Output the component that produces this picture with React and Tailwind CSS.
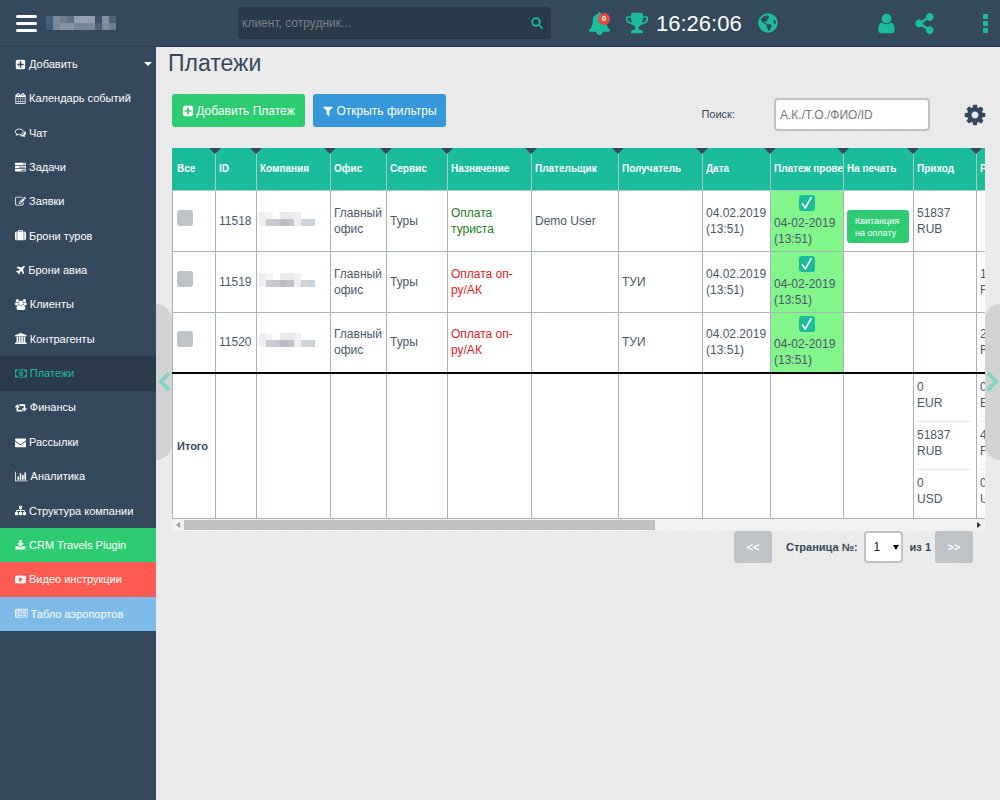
import React from "react";
import { FaGlobeAmericas, FaShareAlt } from "react-icons/fa";

const P = {
  plus: [1792, "M1408 960v-128q0-26-19-45t-45-19h-320v-320q0-26-19-45t-45-19h-128q-26 0-45 19t-19 45v320h-320q-26 0-45 19t-19 45v128q0 26 19 45t45 19h320v320q0 26 19 45t45 19h128q26 0 45-19t19-45v-320h320q26 0 45-19t19-45zm256-544v960q0 119-84.5 203.5t-203.5 84.5h-960q-119 0-203.5-84.5t-84.5-203.5v-960q0-119 84.5-203.5t203.5-84.5h960q119 0 203.5 84.5t84.5 203.5z"],
  calendar: [1792, "M192 1664h288v-288h-288v288zm352 0h320v-288h-320v288zm-352-352h288v-320h-288v320zm352 0h320v-320h-320v320zm-352-384h288v-288h-288v288zm736 736h320v-288h-320v288zm-384-736h320v-288h-320v288zm768 736h288v-288h-288v288zm-384-352h320v-320h-320v320zm-352-864v-288q0-13-9.5-22.5t-22.5-9.5h-64q-13 0-22.5 9.5t-9.5 22.5v288q0 13 9.5 22.5t22.5 9.5h64q13 0 22.5-9.5t9.5-22.5zm736 864h288v-320h-288v320zm-384-384h320v-288h-320v288zm384 0h288v-288h-288v288zm32-480v-288q0-13-9.5-22.5t-22.5-9.5h-64q-13 0-22.5 9.5t-9.5 22.5v288q0 13 9.5 22.5t22.5 9.5h64q13 0 22.5-9.5t9.5-22.5zm384-64v1280q0 52-38 90t-90 38h-1408q-52 0-90-38t-38-90v-1280q0-52 38-90t90-38h128v-96q0-66 47-113t113-47h64q66 0 113 47t47 113v96h384v-96q0-66 47-113t113-47h64q66 0 113 47t47 113v96h128q52 0 90 38t38 90z"],
  chat: [1792, "M704 384q-153 0-286 52t-211.5 141-78.5 191q0 82 53 158t149 132l97 56-35 84q34-20 62-39l44-31 53 10q78 14 153 14 153 0 286-52t211.5-141 78.5-191-78.5-191-211.5-141-286-52zm0-128q191 0 353.5 68.5t256.5 186.5 94 257-94 257-256.5 186.5-353.5 68.5q-86 0-176-16-124 88-278 128-36 9-86 16h-3q-11 0-20.5-8t-11.5-21q-1-3-1-6.5t.5-6.5 2-6l2.5-5 3.5-5.5 4-5 4.5-5 4-4.5q5-6 23-25t26-29.5 22.5-29 25-38.5 20.5-44q-124-72-195-177t-71-224q0-139 94-257t256.5-186.5 353.5-68.5zm822 1169q10 24 20.5 44t25 38.5 22.5 29 26 29.5 23 25q1 1 4 4.5t4.5 5 4 5 3.5 5.5l2.5 5 2 6 .5 6.5-1 6.5q-3 14-13 22t-22 7q-50-7-86-16-154-40-278-128-90 16-176 16-271 0-472-132 58 4 88 4 161 0 309-45t264-129q125-92 192-212t67-254q0-77-23-152 129 71 204 178t75 230q0 120-71 224.5t-195 176.5z"],
  tasks: [1792, "M1024 1408h640v-128h-640v128zm-384-512h1024v-128h-1024v128zm640-512h384v-128h-384v128zm512 832v256q0 26-19 45t-45 19h-1664q-26 0-45-19t-19-45v-256q0-26 19-45t45-19h1664q26 0 45 19t19 45zm0-512v256q0 26-19 45t-45 19h-1664q-26 0-45-19t-19-45v-256q0-26 19-45t45-19h1664q26 0 45 19t19 45zm0-512v256q0 26-19 45t-45 19h-1664q-26 0-45-19t-19-45v-256q0-26 19-45t45-19h1664q26 0 45 19t19 45z"],
  edit: [1792, "M888 1184l116-116-152-152-116 116v56h96v96h56zm440-720q-16-16-33 1l-350 350q-17 17-1 33t33-1l350-350q17-17 1-33zm80 594v190q0 119-84.5 203.5t-203.5 84.5h-832q-119 0-203.5-84.5t-84.5-203.5v-832q0-119 84.5-203.5t203.5-84.5h832q63 0 117 25 15 7 18 23 3 17-9 29l-49 49q-14 14-32 8-23-6-45-6h-832q-66 0-113 47t-47 113v832q0 66 47 113t113 47h832q66 0 113-47t47-113v-126q0-13 9-22l64-64q15-15 35-7t20 29zm-96-738l288 288-672 672h-288v-288zm444 132l-92 92-288-288 92-92q28-28 68-28t68 28l152 152q28 28 28 68t-28 68z"],
  suitcase: [1792, "M640 256h512v-128h-512v128zm-352 0v1408h-64q-92 0-158-66t-66-158v-960q0-92 66-158t158-66h64zm1120 0v1408h-1024v-1408h128v-160q0-40 28-68t68-28h576q40 0 68 28t28 68v160h128zm384 224v960q0 92-66 158t-158 66h-64v-1408h64q92 0 158 66t66 158z"],
  plane: [1664, "M1568 160q44 52 12 148t-108 172l-161 161 160 696q5 19-12 33l-128 96q-7 6-19 6-4 0-7-1-15-3-21-16l-279-508-259 259 53 194q5 17-8 31l-96 96q-9 9-23 9h-2q-15-2-24-13l-189-252-252-189q-11-7-13-23-1-13 9-25l96-97q9-9 23-9 6 0 8 1l194 53 259-259-508-279q-14-8-17-24-2-16 9-27l128-128q14-13 30-8l665 159 160-160q76-76 172-108t148 12z"],
  users: [1920, "M593 896q-162 5-265 128h-134q-82 0-138-40.5t-56-118.5q0-353 124-353 6 0 43.5 21t97.5 42.5 119 21.5q67 0 133-23-5 37-5 66 0 139 81 256zm1071 637q0 120-73 189.5t-194 69.5h-874q-121 0-194-69.5t-73-189.5q0-53 3.5-103.5t14-109 26.5-108.5 43-97.5 62-81 85.5-53.5 111.5-20q10 0 43 21.5t73 48 107 48 135 21.5 135-21.5 107-48 73-48 43-21.5q61 0 111.5 20t85.5 53.5 62 81 43 97.5 26.5 108.5 14 109 3.5 103.5zm-1024-1277q0 106-75 181t-181 75-181-75-75-181 75-181 181-75 181 75 75 181zm704 384q0 159-112.5 271.5t-271.5 112.5-271.5-112.5-112.5-271.5 112.5-271.5 271.5-112.5 271.5 112.5 112.5 271.5zm576 225q0 78-56 118.5t-138 40.5h-134q-103-123-265-128 81-117 81-256 0-29-5-66 66 23 133 23 59 0 119-21.5t97.5-42.5 43.5-21q124 0 124 353zm-128-609q0 106-75 181t-181 75-181-75-75-181 75-181 181-75 181 75 75 181z"],
  bank: [1920, "M960 0l960 384v128h-128q0 26-20.5 45t-48.5 19h-1526q-28 0-48.5-19t-20.5-45h-128v-128zm-704 640h256v768h128v-768h256v768h128v-768h256v768h128v-768h256v768h59q28 0 48.5 19t20.5 45v64h-1664v-64q0-26 20.5-45t48.5-19h59v-768zm1595 960q28 0 48.5 19t20.5 45v128h-1920v-128q0-26 20.5-45t48.5-19h1782z"],
  money: [1920, "M768 1152h384v-96h-128v-448h-114l-148 137 77 80q42-37 55-57h2v288h-128v96zm512-256q0 70-21 142t-59.5 134-101.5 101-138 39-138-39-101.5-101-59.5-134-21-142 21-142 59.5-134 101.5-101 138-39 138 39 101.5 101 59.5 134 21 142zm512 256v-512q-106 0-181-75t-75-181h-1152q0 106-75 181t-181 75v512q106 0 181 75t75 181h1152q0-106 75-181t181-75zm128-832v1152q0 26-19 45t-45 19h-1792q-26 0-45-19t-19-45v-1152q0-26 19-45t45-19h1792q26 0 45 19t19 45z"],
  retweet: [1920, "M1280 1504q0 13-9.5 22.5t-22.5 9.5h-960q-8 0-13.5-2t-9-7-5.5-8-3-11.5-1-11.5v-600h-192q-26 0-45-19t-19-45q0-24 15-41l320-384q19-22 49-22t49 22l320 384q15 17 15 41 0 26-19 45t-45 19h-192v384h576q16 0 25 11l160 192q7 10 7 21zm640-416q0 24-15 41l-320 384q-20 23-49 23t-49-23l-320-384q-15-17-15-41 0-26 19-45t45-19h192v-384h-576q-16 0-25-12l-160-192q-7-9-7-20 0-13 9.5-22.5t22.5-9.5h960q8 0 13.5 2t9 7 5.5 8 3 11.5 1 11.5v600h192q26 0 45 19t19 45z"],
  mail: [1792, "M1792 710v794q0 66-47 113t-113 47h-1472q-66 0-113-47t-47-113v-794q44 49 101 87 362 246 497 345 57 42 92.5 65.5t94.5 48 110 24.5h2q51 0 110-24.5t94.5-48 92.5-65.5q170-123 498-345 57-39 100-87zm0-294q0 79-49 151t-122 123q-376 261-468 325-10 7-42.5 31t-54 38.5-52 32.5-57.5 27-50 9h-2q-23 0-50-9t-57.5-27-52-32.5-54-38.5-42.5-31q-91-64-262-182.5t-205-142.5q-62-42-117-115.5t-55-136.5q0-78 41.5-130t118.5-52h1472q65 0 112.5 47t47.5 113z"],
  chart: [2048, "M640 896v512h-256v-512h256zm384-512v1024h-256v-1024h256zm1024 1152v128h-2048v-1536h128v1408h1920zm-640-896v768h-256v-768h256zm384-384v1152h-256v-1152h256z"],
  sitemap: [1792, "M1792 1248v320q0 40-28 68t-68 28h-320q-40 0-68-28t-28-68v-320q0-40 28-68t68-28h96v-192h-512v192h96q40 0 68 28t28 68v320q0 40-28 68t-68 28h-320q-40 0-68-28t-28-68v-320q0-40 28-68t68-28h96v-192h-512v192h96q40 0 68 28t28 68v320q0 40-28 68t-68 28h-320q-40 0-68-28t-28-68v-320q0-40 28-68t68-28h96v-192q0-52 38-90t90-38h512v-192h-96q-40 0-68-28t-28-68v-320q0-40 28-68t68-28h320q40 0 68 28t28 68v320q0 40-28 68t-68 28h-96v192h512q52 0 90 38t38 90v192h96q40 0 68 28t28 68z"],
  download: [1792, "M1344 1344q0-26-19-45t-45-19-45 19-19 45 19 45 45 19 45-19 19-45zm256 0q0-26-19-45t-45-19-45 19-19 45 19 45 45 19 45-19 19-45zm128-224v320q0 40-28 68t-68 28h-1472q-40 0-68-28t-28-68v-320q0-40 28-68t68-28h465l135 136q58 56 136 56t136-56l136-136h464q40 0 68 28t28 68zm-325-569q17 41-14 70l-448 448q-18 19-45 19t-45-19l-448-448q-31-29-14-70 17-39 59-39h256v-448q0-26 19-45t45-19h256q26 0 45 19t19 45v448h256q42 0 59 39z"],
  video: [1792, "M1280 896q0-37-30-54l-512-320q-31-20-65-2-33 18-33 56v640q0 38 33 56 16 8 31 8 20 0 34-10l512-320q30-17 30-54zm512 0q0 96-1 150t-8.5 136.5-22.5 147.5q-16 73-69 123t-124 58q-222 25-671 25t-671-25q-71-8-124.5-58t-69.5-123q-14-65-21.5-147.5t-8.5-136.5-1-150 1-150 8.5-136.5 22.5-147.5q16-73 69-123t124-58q222-25 671-25t671 25q71 8 124.5 58t69.5 123q14 65 21.5 147.5t8.5 136.5 1 150z"],
  news: [2048, "M1024 512h-384v384h384v-384zm128 640v128h-640v-128h640zm0-768v640h-640v-640h640zm640 768v128h-512v-128h512zm0-256v128h-512v-128h512zm0-256v128h-512v-128h512zm0-256v128h-512v-128h512zm-1536 960v-960h-128v960q0 26 19 45t45 19 45-19 19-45zm1664 0v-1088h-1536v1088q0 33-11 64h1483q26 0 45-19t19-45zm128-1216v1216q0 80-56 136t-136 56h-1664q-80 0-136-56t-56-136v-1088h256v-128h1792z"],
  filter: [1792, "M1595 295q17 41-14 70l-493 493v742q0 42-39 59-13 5-25 5-27 0-45-19l-256-256q-19-19-19-45v-486l-493-493q-31-29-14-70 17-39 59-39h1280q42 0 59 39z"],
  cog: [1792, "M1152 896q0-106-75-181t-181-75-181 75-75 181 75 181 181 75 181-75 75-181zm512-109v222q0 12-8 23t-20 13l-185 28q-19 54-39 91 35 50 107 138 10 12 10 25t-9 23q-27 37-99 108t-94 71q-12 0-26-9l-138-108q-44 23-91 38-16 136-29 186-7 28-36 28h-222q-14 0-24.5-8.5t-11.5-21.5l-28-184q-49-16-90-37l-141 107q-10 9-25 9-14 0-25-11-126-114-165-168-7-10-7-23 0-12 8-23 15-21 51-66.5t54-70.5q-27-50-41-99l-183-27q-13-2-21-12.5t-8-23.5v-222q0-12 8-23t19-13l186-28q14-46 39-92-40-57-107-138-10-12-10-24 0-10 9-23 26-36 98.5-107.5t94.5-71.5q13 0 26 10l138 107q44-23 91-38 16-136 29-186 7-28 36-28h222q14 0 24.5 8.5t11.5 21.5l28 184q49 16 90 37l142-107q9-9 24-9 13 0 25 10 129 119 165 170 7 8 7 22 0 12-8 23-15 21-51 66.5t-54 70.5q26 50 41 98l183 28q13 2 21 12.5t8 23.5z"],
  user: [1792, "M1536 1399q0 109-62.5 187t-150.5 78h-854q-88 0-150.5-78t-62.5-187q0-85 8.5-160.5t31.5-152 58.5-131 94-89 134.5-34.5q131 128 313 128t313-128q76 0 134.5 34.5t94 89 58.5 131 31.5 152 8.5 160.5zm-256-887q0 159-112.5 271.5t-271.5 112.5-271.5-112.5-112.5-271.5 112.5-271.5 271.5-112.5 271.5 112.5 112.5 271.5z"],
  trophy: [1792, "M522 883q-74-162-74-371h-256v96q0 78 94.5 162t235.5 113zm1078-275v-96h-256q0 209-74 371 141-29 235.5-113t94.5-162zm128-128v128q0 71-41.5 143t-112 130-173 97.5-215.5 44.5q-42 54-95 95-38 34-52.5 72.5t-14.5 89.5q0 54 30.5 91t97.5 37q75 0 133.5 45.5t58.5 114.5v64q0 14-9 23t-23 9h-832q-14 0-23-9t-9-23v-64q0-69 58.5-114.5t133.5-45.5q67 0 97.5-37t30.5-91q0-51-14.5-89.5t-52.5-72.5q-53-41-95-95-113-5-215.5-44.5t-173-97.5-112-130-41.5-143v-128q0-40 28-68t68-28h288v-96q0-66 47-113t113-47h576q66 0 113 47t47 113v96h288q40 0 68 28t28 68z"],
  bell: [1792, "M1728 1408q0 52-38 90t-90 38h-448q0 106-75 181t-181 75-181-75-75-181h-448q-52 0-90-38t-38-90q50-42 91-88t85-119.5 74.5-158.5 50-206 19.5-260q0-152 117-282.5t307-158.5q-8-19-8-39 0-40 28-68t68-28 68 28 28 68q0 20-8 39 190 28 307 158.5t117 282.5q0 139 19.5 260t50 206 74.5 158.5 85 119.5 91 88z"],
};

function Icon({ name, className = "h-3" }) {
  const [w, d] = P[name];
  return (
    <svg aria-hidden="true" viewBox={`0 0 ${w} 1792`} fill="currentColor" className={`shrink-0 ${className}`}>
      <path d={d} />
    </svg>
  );
}

const MENU = [
  ["plus", "Добавить"],
  ["calendar", "Календарь событий"],
  ["chat", "Чат"],
  ["tasks", "Задачи"],
  ["edit", "Заявки"],
  ["suitcase", "Брони туров"],
  ["plane", "Брони авиа"],
  ["users", "Клиенты"],
  ["bank", "Контрагенты"],
  ["money", "Платежи", "bg-[#2b3b4b] text-[#1abc9c]"],
  ["retweet", "Финансы"],
  ["mail", "Рассылки"],
  ["chart", "Аналитика"],
  ["sitemap", "Структура компании"],
  ["download", "CRM Travels Plugin", "bg-[#2ecc71] text-white"],
  ["video", "Видео инструкции", "bg-[#ff5b52] text-white"],
  ["news", "Табло аэропортов", "bg-[#7fbbe8] text-white"],
];

const COLUMNS = [
  ["Все", "w-[43px]"],
  ["ID", "w-[41px]"],
  ["Компания", "w-[74px]"],
  ["Офис", "w-[56px]"],
  ["Сервис", "w-[61px]"],
  ["Назначение", "w-[84px]"],
  ["Плательщик", "w-[87px]"],
  ["Получатель", "w-[84px]"],
  ["Дата", "w-[68px]"],
  ["Платеж проведен", "w-[73px]"],
  ["На печать", "w-[70px]"],
  ["Приход", "w-[63px]"],
  ["Расход", "w-[63px]"],
];

const ROWS = [
  { id: "11518", kind: "Оплата туриста", tone: "text-[#1c7c1c]", payer: "Demo User", payee: "", receipt: true, income: "51837 RUB", expense: "" },
  { id: "11519", kind: "Оплата оп-ру/АК", tone: "text-[#e81c1c]", payer: "", payee: "ТУИ", income: "", expense: "18400 RUB" },
  { id: "11520", kind: "Оплата оп-ру/АК", tone: "text-[#e81c1c]", payer: "", payee: "ТУИ", income: "", expense: "28100 RUB" },
];

function Mosaic({ rows, className }) {
  return (
    <svg aria-hidden="true" shapeRendering="crispEdges" viewBox={`0 0 ${rows[0].length * 7} ${rows.length * 7}`} className={className}>
      {rows.map((r, y) => r.map((c, x) => c && <rect key={`${x}-${y}`} x={x * 7} y={y * 7} width="7" height="7" fill={c} />))}
    </svg>
  );
}

const NAME_MOSAIC = [
  ["#4a6080", "#7c8b9b", "#6b7c8f", "#5f7287", "#94a0ad", "#97a3b0", "#93a0ae", "#3d5268", "#8290a0", "#4c6076"],
  ["#43597a", "#7b8998", "#8391a0", "#8592a2", "#76869a", "#74859a", "#7a8a9d", "#4d6178", "#7d8c9c", "#6c7d90"],
];
const COMPANY_MOSAIC = [
  ["#eeeeef", "#f5f5f6", "", "#e9eaec", "#e9eaec", "#eeeff1", "", ""],
  ["#f0f0f2", "#cacbd2", "#c6c7cf", "#bbbcc5", "#c2c3cc", "#eceef0", "#d2d3d6", "#c6d3dd"],
];

const td = "border border-[#a9b4b4] pr-1 pl-[3px] py-0";

function Money({ value }) {
  const [a, b] = value.split(" ");
  return (
    <>
      {a}
      <br />
      {b}
    </>
  );
}

function Totals({ values }) {
  return (
    <div className="flex flex-col divide-y divide-[#e8e8e8]">
      {values.map((v) => (
        <div key={v} className="h-12 pt-[5px]">
          <Money value={v} />
        </div>
      ))}
    </div>
  );
}

function Header() {
  return (
    <header className="flex h-[47px] shrink-0 items-center border-b border-[#2c3e50] bg-[#34495e] text-[#1abc9c]">
      <div className="flex w-[238px] shrink-0 items-center gap-[9px] pl-4">
        <button type="button" aria-label="Меню" className="flex w-[21px] flex-col gap-1">
          <span className="h-[3px] rounded-sm bg-white" />
          <span className="h-[3px] rounded-sm bg-white" />
          <span className="h-[3px] rounded-sm bg-white" />
        </button>
        <Mosaic rows={NAME_MOSAIC} className="h-[14px] w-[70px]" />
      </div>
      <div className="flex h-8 w-[313px] items-center rounded bg-[#293a4a] pr-2">
        <input type="text" aria-label="Поиск клиента" placeholder="клиент, сотрудник..." className="min-w-0 flex-1 bg-transparent px-1 text-[12px] outline-none placeholder:text-[#7b7f84]" />
        <button type="button" aria-label="Найти">
          <svg viewBox="0 0 12 12" className="size-3" fill="none" stroke="currentColor" strokeWidth="1.7" strokeLinecap="round">
            <circle cx="5" cy="5" r="3.8" />
            <path d="M8 8l3 3" />
          </svg>
        </button>
      </div>
      <div className="ml-[37px] flex items-center gap-3.5">
        <button type="button" aria-label="Уведомления" className="relative">
          <Icon name="bell" className="size-[23px]" />
          <span className="absolute top-px right-px flex size-3 items-center justify-center rounded-full bg-[#e74c3c] text-[8px] font-bold text-white">0</span>
        </button>
        <button type="button" aria-label="Достижения">
          <Icon name="trophy" className="size-6" />
        </button>
      </div>
      <time className="ml-[7px] text-[22px] text-white">16:26:06</time>
      <button type="button" aria-label="Язык" className="ml-4">
        <FaGlobeAmericas className="size-5" />
      </button>
      <div className="ml-auto flex items-center">
        <button type="button" aria-label="Профиль" className="mr-4">
          <Icon name="user" className="size-[23px]" />
        </button>
        <button type="button" aria-label="Поделиться" className="mr-12">
          <FaShareAlt className="size-[21px]" />
        </button>
        <button type="button" aria-label="Ещё" className="mr-3 flex flex-col gap-0.5">
          <span className="size-[5px] rounded-[1px] bg-current" />
          <span className="size-[5px] rounded-[1px] bg-current" />
          <span className="size-[5px] rounded-[1px] bg-current" />
        </button>
      </div>
    </header>
  );
}

function Sidebar() {
  return (
    <nav className="w-[156px] shrink-0 bg-[#34495e] text-[11px] text-white">
      <ul className="grid h-[584px] auto-rows-fr">
        {MENU.map(([icon, label, tone = ""], i) => (
          <li key={label} className="min-h-0">
            <a href="#" className={`flex h-full items-center gap-[3px] pr-1 pl-[15px] whitespace-nowrap ${tone}`}>
              <Icon name={icon} className="h-[11px]" />
              {label}
              {i === 0 && <span className="ml-auto border-x-4 border-t-4 border-x-transparent border-t-white" />}
            </a>
          </li>
        ))}
      </ul>
    </nav>
  );
}

function PaymentsTable() {
  return (
    <div className="overflow-x-auto [scrollbar-width:none]">
      <table className="w-[868px] table-fixed border-collapse bg-white text-[12px] leading-4 text-[#4b586b]">
        <colgroup>
          {COLUMNS.map(([name, w]) => (
            <col key={name} className={w} />
          ))}
        </colgroup>
        <thead>
          <tr className="h-[42px] bg-[#1abc9c] text-left text-[10px] text-white">
            {COLUMNS.map(([name]) => (
              <th key={name} className="relative border-x border-b border-[#a9c9c3] pl-[3px] whitespace-nowrap first:border-l-[#1abc9c] first:pl-1">
                <span className="block overflow-hidden">{name}</span>
                <span className="absolute top-0 -right-1.5 z-10 border-x-[6px] border-t-[6px] border-x-transparent border-t-[#34495e]" />
              </th>
            ))}
          </tr>
        </thead>
        <tbody>
          {ROWS.map((r) => (
            <tr key={r.id} className="h-[61px]">
              <td className={td}>
                <input type="checkbox" aria-label={`Выбрать ${r.id}`} className="mb-1.5 ml-px block size-4 appearance-none rounded-[3px] bg-[#bdc3c7]" />
              </td>
              <td className={td}>{r.id}</td>
              <td className="border border-[#a9b4b4] p-0 pl-0.5">
                <Mosaic rows={COMPANY_MOSAIC} className="mb-1 h-[14px] w-14" />
              </td>
              <td className={td}>Главный офис</td>
              <td className={td}>Туры</td>
              <td className={`${td} ${r.tone}`}>{r.kind}</td>
              <td className={td}>{r.payer}</td>
              <td className={td}>{r.payee}</td>
              <td className={td}>04.02.2019 (13:51)</td>
              <td className={`${td} bg-[#82f58b]`}>
                <span className="relative mx-auto mb-1 block size-4">
                  <input type="checkbox" defaultChecked aria-label={`Платеж ${r.id} проведен`} className="block size-4 appearance-none rounded-[3px] bg-[#1abc9c]" />
                  <svg aria-hidden="true" viewBox="0 0 16 16" className="pointer-events-none absolute inset-0 size-4" fill="none" stroke="white" strokeWidth="1.6" strokeLinecap="round" strokeLinejoin="round">
                    <path d="M3.5 9l2.8 4L12 2.8" />
                  </svg>
                </span>
                04-02-2019 (13:51)
              </td>
              <td className={td}>
                {r.receipt && (
                  <button type="button" className="mt-3 block h-[33px] w-[62px] rounded-[3px] bg-[#2ecc71] pl-2 text-left text-[9px] leading-3 text-white">
                    Квитанция на оплату
                  </button>
                )}
              </td>
              <td className={td}>
                <Money value={r.income} />
              </td>
              <td className={td}>
                <Money value={r.expense} />
              </td>
            </tr>
          ))}
          <tr className="h-[143px] border-t-2 border-t-black">
            <th scope="row" className="border-x border-b border-[#a9b4b4] px-1 text-left text-[11px] text-[#34495e]">Итого</th>
            {COLUMNS.slice(1, 11).map(([name]) => (
              <td key={name} className="border-x border-b border-[#a9b4b4]" />
            ))}
            <td className="border-x border-b border-[#a9b4b4] py-0 pr-1 pl-[3px] align-top">
              <Totals values={["0 EUR", "51837 RUB", "0 USD"]} />
            </td>
            <td className="border-x border-b border-[#a9b4b4] py-0 pr-1 pl-[3px] align-top">
              <Totals values={["0 EUR", "46500 RUB", "0 USD"]} />
            </td>
          </tr>
        </tbody>
      </table>
    </div>
  );
}

function Pager() {
  return (
    <div className="mr-3 flex items-center justify-end text-[11px] font-bold text-[#34495e]">
      <button type="button" aria-label="Назад" className="h-8 w-[38px] rounded-[3px] bg-[#bdc3c7] text-white">&lt;&lt;</button>
      <label htmlFor="page" className="ml-[14px]">Страница №:</label>
      <span className="relative ml-1.5">
        <select id="page" className="block h-8 w-[39px] appearance-none rounded border-2 border-[#bdc3c7] bg-white pl-2 text-[12px] font-normal text-[#222]">
          <option>1</option>
        </select>
        <span className="pointer-events-none absolute top-3.5 right-1 border-x-[3px] border-t-[5px] border-x-transparent border-t-black" />
      </span>
      <span className="ml-[7px]">из 1</span>
      <button type="button" aria-label="Вперед" className="ml-1 h-8 w-[38px] rounded-[3px] bg-[#bdc3c7] text-white">&gt;&gt;</button>
    </div>
  );
}

export default function App() {
  return (
    <div className="flex min-h-screen flex-col overflow-hidden font-['Liberation_Sans',Arial,sans-serif]">
      <Header />
      <div className="flex flex-1">
        <Sidebar />
        <main className="relative min-w-0 flex-1 bg-[#ededed] bg-[repeating-linear-gradient(0deg,rgba(0,0,0,0.01)_0px,rgba(0,0,0,0.01)_1px,transparent_1px,transparent_2px),repeating-linear-gradient(90deg,rgba(0,0,0,0.01)_0px,rgba(0,0,0,0.01)_1px,transparent_1px,transparent_3px)] pr-[15px] pl-4">
          <h1 className="-ml-1 h-8 text-[23px] leading-8 text-[#34495e]">Платежи</h1>
          <div className="mt-[15px] flex items-start text-[12px]">
            <button type="button" className="flex h-[33px] w-[133px] items-center justify-center gap-0.5 rounded-[3px] bg-[#2ecc71] text-white">
              <Icon name="plus" />
              Добавить Платеж
            </button>
            <button type="button" className="ml-2 flex h-[33px] w-[133px] items-center justify-center gap-0.5 rounded-[3px] bg-[#3498db] text-white">
              <Icon name="filter" />
              Открыть фильтры
            </button>
            <div className="mt-1 ml-auto flex items-center">
              <label htmlFor="search" className="text-[11px] text-[#34495e]">Поиск:</label>
              <input id="search" type="text" placeholder="А.К./Т.О./ФИО/ID" className="ml-[39px] h-[33px] w-[156px] rounded border-2 border-[#bdc3c7] bg-white px-1 text-[12px] outline-none placeholder:text-[#777]" />
              <button type="button" aria-label="Настройки" className="-mr-0.5 ml-[33px] text-[#34495e]">
                <Icon name="cog" className="h-6" />
              </button>
            </div>
          </div>
          <div className="mt-[17px]">
            <PaymentsTable />
            <div aria-hidden="true" className="flex h-3 items-center justify-between bg-[#f1f1f1] px-1">
              <span className="border-y-[3px] border-r-4 border-y-transparent border-r-[#a3a3a3]" />
              <span className="ml-1 h-[10px] w-[471px] bg-[#c1c1c1]" />
              <span className="ml-auto border-y-[3px] border-l-4 border-y-transparent border-l-[#333]" />
            </div>
          </div>
          <Pager />
          <button type="button" aria-label="Прокрутить влево" className="absolute top-[257px] left-0 flex h-[156px] w-4 items-center justify-center rounded-r-2xl bg-[#d2d2d2] text-[#7fd3c2]">
            <svg viewBox="0 0 14 22" className="h-[22px] w-[14px]" fill="none" stroke="currentColor" strokeWidth="4">
              <path d="M12 2L4 10.500l8 8.500" />
            </svg>
          </button>
          <button type="button" aria-label="Прокрутить вправо" className="absolute top-[257px] right-0 flex h-[156px] w-[15px] items-center justify-center rounded-l-2xl bg-[#d2d2d2] text-[#7fd3c2]">
            <svg viewBox="0 0 14 22" className="h-[22px] w-[14px]" fill="none" stroke="currentColor" strokeWidth="4">
              <path d="M2 2l8 8.500-8 8.500" />
            </svg>
          </button>
        </main>
      </div>
    </div>
  );
}
